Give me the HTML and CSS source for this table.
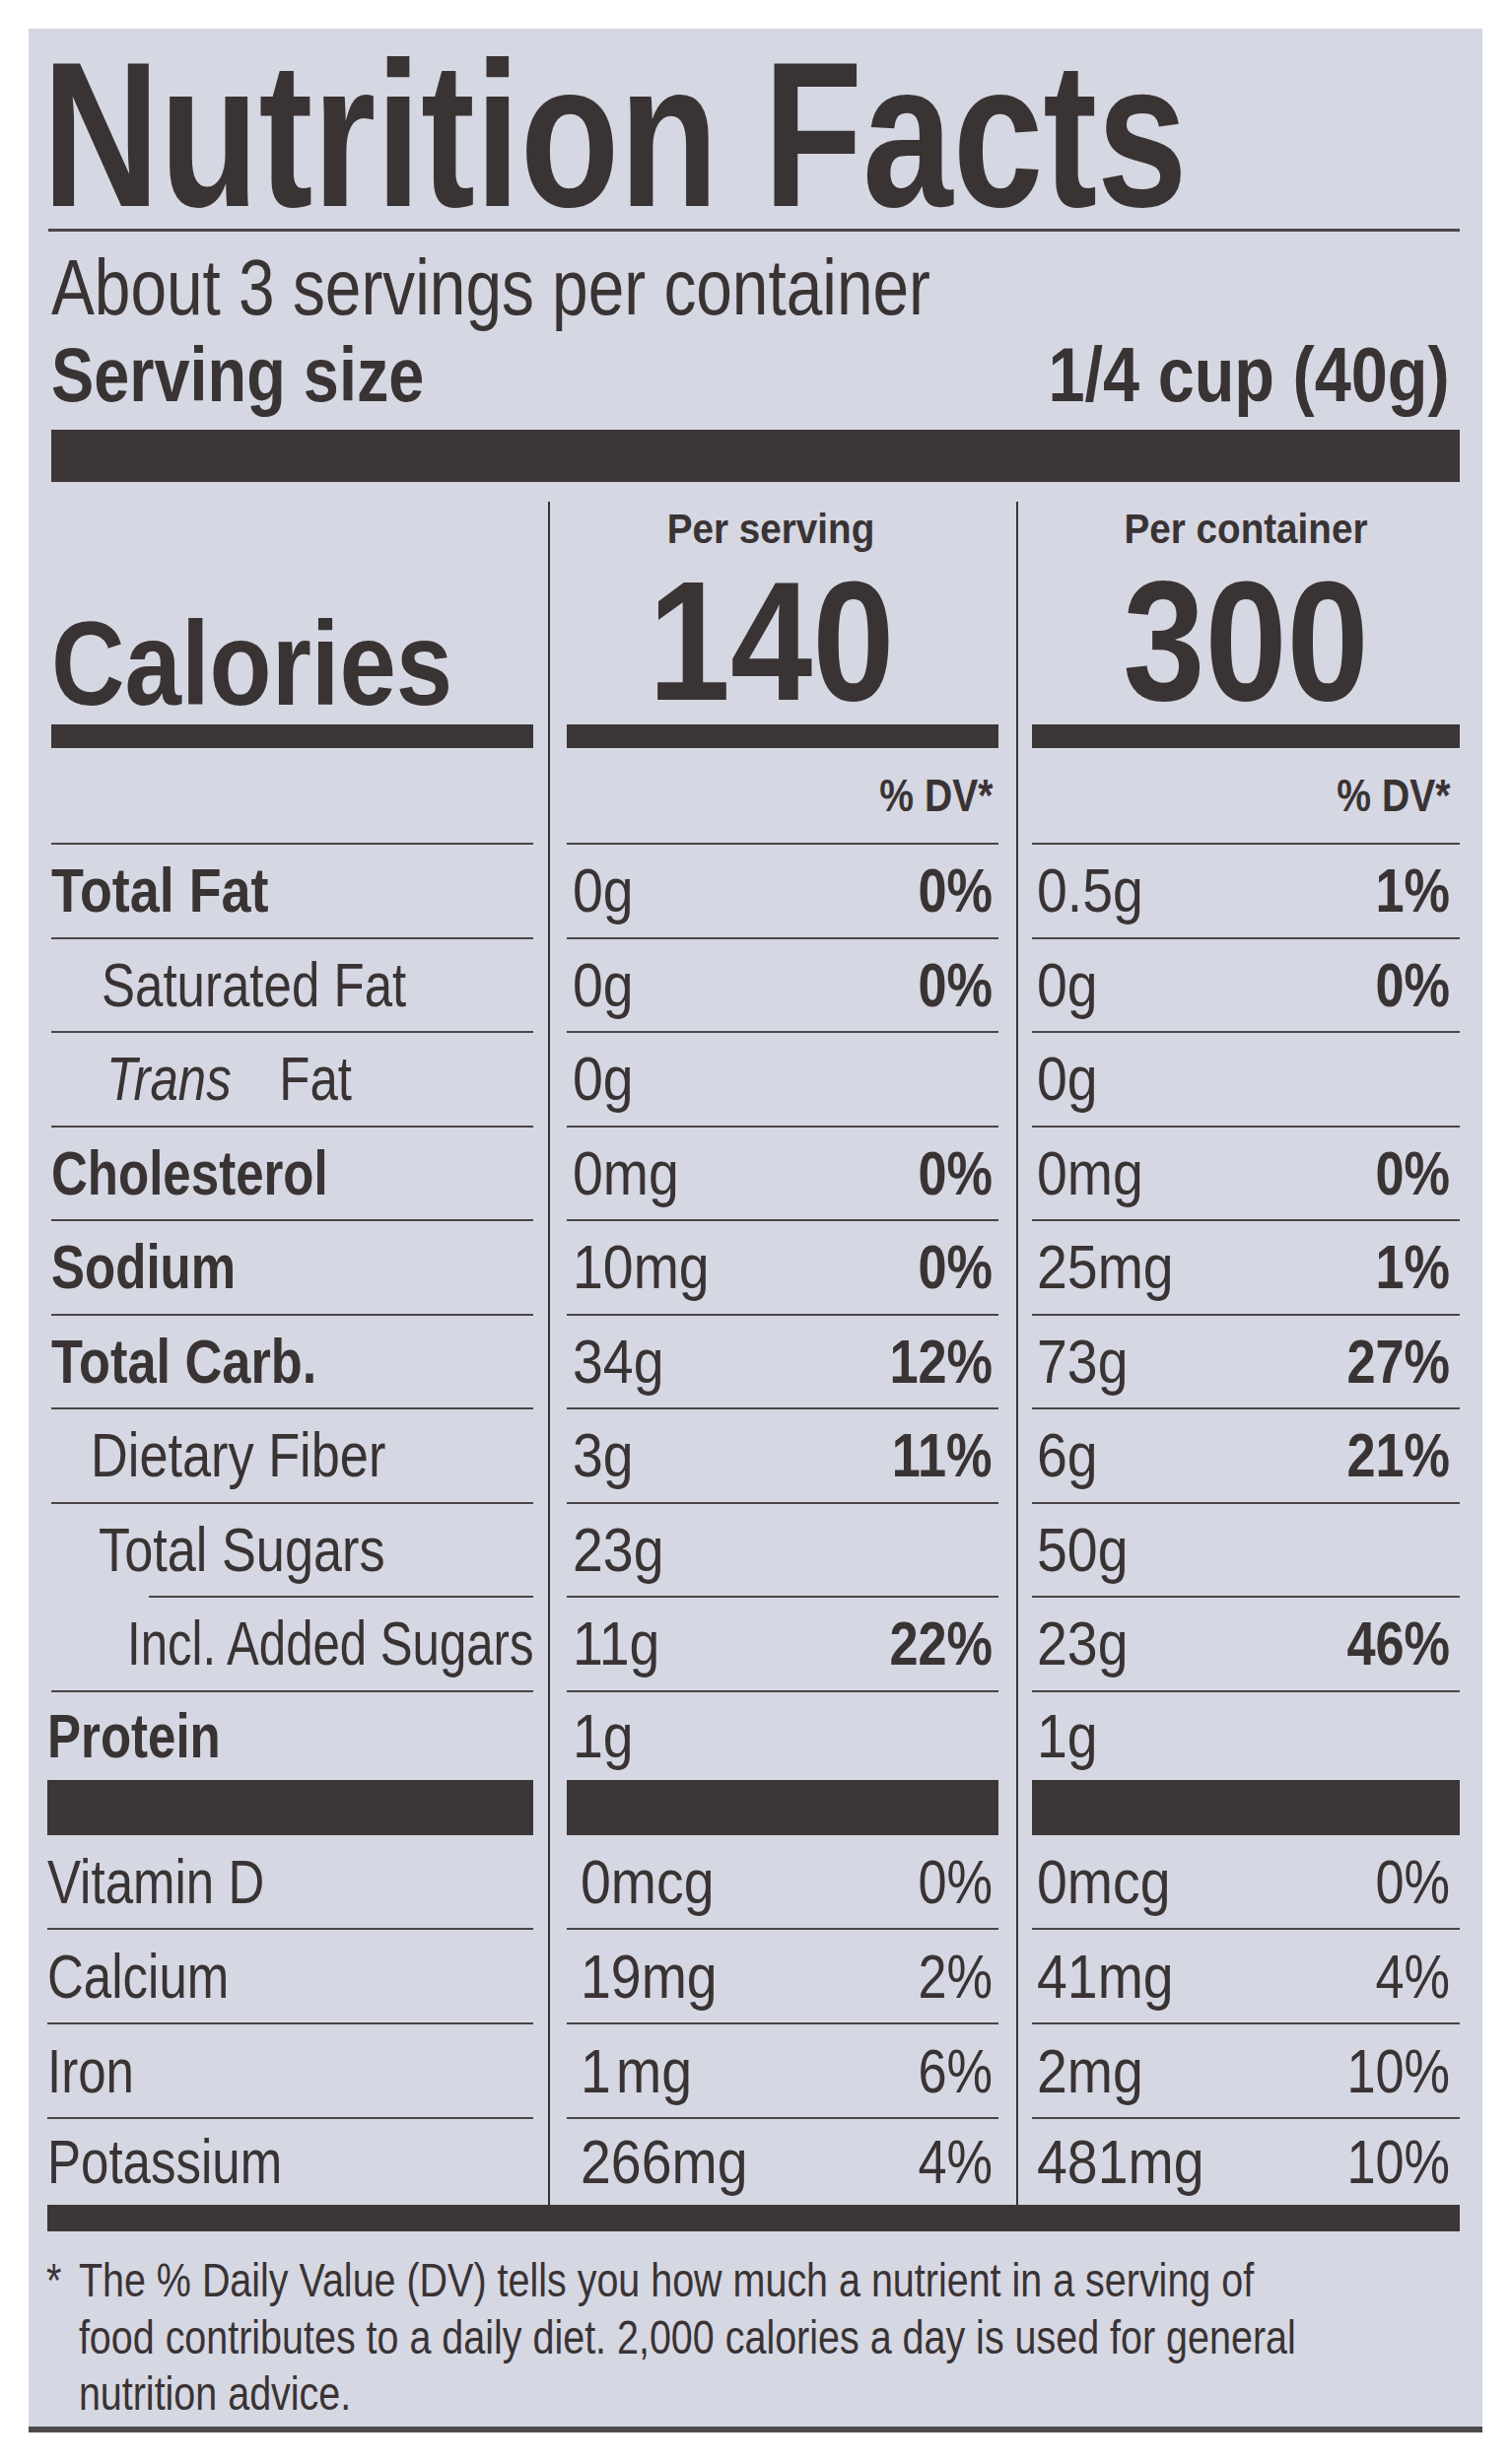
FILE: index.html
```html
<!DOCTYPE html>
<html lang="en">
<head>
<meta charset="utf-8">
<title>Nutrition Facts</title>
<link rel="stylesheet" href="styles.css">
</head>
<body>
<div class="page">
  <section class="label">
    <h1 class="title">Nutrition Facts</h1>
    <div class="hair"></div>
    <p class="servings">About 3 servings per container</p>
    <div class="serving-size"><span class="ss-lab">Serving size</span><span class="ss-val">1/4 cup (40g)</span></div>
    <div class="bar-top"></div>

    <div class="table">
      <div class="row head">
        <div class="c c1"><div class="cal">Calories</div><div class="bar-m"></div></div>
        <div class="c c2"><div class="per">Per serving</div><div class="big">140</div><div class="bar-m"></div></div>
        <div class="c c3"><div class="per">Per container</div><div class="big">300</div><div class="bar-m"></div></div>
      </div>

      <div class="row dvr">
        <div class="c c1"><div class="in"></div></div>
        <div class="c c2"><div class="in"><span>% DV*</span></div></div>
        <div class="c c3"><div class="in"><span>% DV*</span></div></div>
      </div>

      <div class="row n">
        <div class="c c1"><div class="in b"><span class="wide">Total Fat</span></div></div>
        <div class="c c2"><div class="in"><span>0g</span><span class="b">0%</span></div></div>
        <div class="c c3"><div class="in"><span>0.5g</span><span class="b">1%</span></div></div>
      </div>
      <div class="row n">
        <div class="c c1"><div class="in ind-sat"><span>Saturated Fat</span></div></div>
        <div class="c c2"><div class="in"><span>0g</span><span class="b">0%</span></div></div>
        <div class="c c3"><div class="in"><span>0g</span><span class="b">0%</span></div></div>
      </div>
      <div class="row n">
        <div class="c c1"><div class="in ind-trans"><span><i class="it">Trans</i>Fat</span></div></div>
        <div class="c c2"><div class="in"><span>0g</span></div></div>
        <div class="c c3"><div class="in"><span>0g</span></div></div>
      </div>
      <div class="row n">
        <div class="c c1"><div class="in b"><span>Cholesterol</span></div></div>
        <div class="c c2"><div class="in"><span>0mg</span><span class="b">0%</span></div></div>
        <div class="c c3"><div class="in"><span>0mg</span><span class="b">0%</span></div></div>
      </div>
      <div class="row n">
        <div class="c c1"><div class="in b"><span>Sodium</span></div></div>
        <div class="c c2"><div class="in"><span>10mg</span><span class="b">0%</span></div></div>
        <div class="c c3"><div class="in"><span>25mg</span><span class="b">1%</span></div></div>
      </div>
      <div class="row n">
        <div class="c c1"><div class="in b"><span class="wide2">Total Carb.</span></div></div>
        <div class="c c2"><div class="in"><span>34g</span><span class="b">12%</span></div></div>
        <div class="c c3"><div class="in"><span>73g</span><span class="b">27%</span></div></div>
      </div>
      <div class="row n">
        <div class="c c1"><div class="in ind-fib"><span class="wide2">Dietary Fiber</span></div></div>
        <div class="c c2"><div class="in"><span>3g</span><span class="b">11%</span></div></div>
        <div class="c c3"><div class="in"><span>6g</span><span class="b">21%</span></div></div>
      </div>
      <div class="row n">
        <div class="c c1"><div class="in short ind-sug"><span class="wide2">Total Sugars</span></div></div>
        <div class="c c2"><div class="in"><span>23g</span></div></div>
        <div class="c c3"><div class="in"><span>50g</span></div></div>
      </div>
      <div class="row n">
        <div class="c c1"><div class="in ind-add"><span class="add">Incl. Added Sugars</span></div></div>
        <div class="c c2"><div class="in"><span>11g</span><span class="b">22%</span></div></div>
        <div class="c c3"><div class="in"><span>23g</span><span class="b">46%</span></div></div>
      </div>
      <div class="row n last">
        <div class="c c1"><div class="in b shift"><span>Protein</span></div></div>
        <div class="c c2"><div class="in"><span>1g</span></div></div>
        <div class="c c3"><div class="in"><span>1g</span></div></div>
      </div>

      <div class="row bars">
        <div class="c c1"><div class="bar-l shift"></div></div>
        <div class="c c2"><div class="bar-l"></div></div>
        <div class="c c3"><div class="bar-l"></div></div>
      </div>

      <div class="row v">
        <div class="c c1"><div class="in shift"><span>Vitamin D</span></div></div>
        <div class="c c2"><div class="in"><span>0mcg</span><span>0%</span></div></div>
        <div class="c c3"><div class="in"><span>0mcg</span><span>0%</span></div></div>
      </div>
      <div class="row v">
        <div class="c c1"><div class="in shift"><span>Calcium</span></div></div>
        <div class="c c2"><div class="in"><span>19mg</span><span>2%</span></div></div>
        <div class="c c3"><div class="in"><span>41mg</span><span>4%</span></div></div>
      </div>
      <div class="row v">
        <div class="c c1"><div class="in shift"><span>Iron</span></div></div>
        <div class="c c2"><div class="in"><span><span class="one">1</span>mg</span><span>6%</span></div></div>
        <div class="c c3"><div class="in"><span>2mg</span><span>10%</span></div></div>
      </div>
      <div class="row v last">
        <div class="c c1"><div class="in shift"><span>Potassium</span></div></div>
        <div class="c c2"><div class="in"><span>266mg</span><span>4%</span></div></div>
        <div class="c c3"><div class="in"><span>481mg</span><span>10%</span></div></div>
      </div>
    </div>

    <div class="bar-bot"></div>

    <p class="foot"><span class="star">*</span>The % Daily Value (DV) tells you how much a nutrient in a serving of<br>food contributes to a daily diet. 2,000 calories a day is used for general<br>nutrition advice.</p>
  </section>
</div>
</body>
</html>
```

FILE: styles.css
```css
html, body {
  margin: 0;
  padding: 0;
  background: #ffffff;
}

body {
  font-family: "Liberation Sans", Arial, sans-serif;
  color: #3a3333;
}

.page {
  padding: 29px 0 0 29px;
  overflow: hidden;
}

.label {
  width: 1475px;
  box-sizing: border-box;
  background: #d5d7e3;
  padding: 18px 23px 4px 23px;
  border-bottom: 6px solid #4e494b;
}

.title {
  margin: 0 0 0 -9px;
  font-size: 210px;
  line-height: 180px;
  font-weight: 700;
  white-space: nowrap;
  transform: scaleX(0.784);
  transform-origin: left center;
}

.hair {
  margin: 5px 0 0 -3px;
  height: 3px;
  background: #4b4647;
}

.servings {
  margin: 13.3px 0 0;
  font-size: 80px;
  line-height: 88px;
  white-space: nowrap;
  transform: scaleX(0.822);
  transform-origin: left center;
}

.serving-size {
  display: flex;
  justify-content: space-between;
  font-size: 77px;
  line-height: 88px;
  font-weight: 700;
  padding-right: 10px;
  white-space: nowrap;
}

.ss-lab {
  transform: scaleX(0.842);
  transform-origin: left center;
}

.ss-val {
  transform: scaleX(0.865);
  transform-origin: right center;
}

.bar-top {
  margin-top: 12px;
  height: 53px;
  background: #3d3637;
}

.table {
  margin-top: 20px;
}

.row {
  display: grid;
  grid-template-columns: 504px 475px 450px;
}

.c {
  box-sizing: border-box;
  min-width: 0;
}

.c1 {
  padding-right: 15px;
}

.c2 {
  border-left: 2px solid #3a3333;
  padding: 0 18px 0 17px;
}

.c3 {
  border-left: 2px solid #3a3333;
  padding-left: 14px;
}

/* header row */
.head .c {
  height: 250px;
  display: flex;
  flex-direction: column;
  justify-content: flex-end;
}

.bar-m {
  height: 24px;
  background: #3d3637;
}

.cal {
  font-size: 120px;
  line-height: 120px;
  font-weight: 700;
  margin-bottom: 2px;
  white-space: nowrap;
  transform: scaleX(0.86);
  transform-origin: left center;
}

.per {
  font-size: 42px;
  line-height: 50px;
  font-weight: 700;
  text-align: center;
  margin-bottom: 13px;
  white-space: nowrap;
  transform: scaleX(0.92);
}

.big {
  font-size: 172px;
  line-height: 150px;
  font-weight: 700;
  text-align: center;
  margin-bottom: 10px;
  transform: scaleX(0.87);
}

.c2 .per,
.c2 .big {
  padding-right: 26px;
}

/* generic cell content */
.in {
  display: flex;
  justify-content: space-between;
  box-sizing: content-box;
  border-bottom: 2px solid #4a4546;
  white-space: nowrap;
}

.in > span {
  transform: scaleX(0.81);
  transform-origin: left center;
}

.c2 .in > span:first-child,
.c3 .in > span:first-child {
  transform: scaleX(0.88);
}

.in > span:last-child:not(:first-child) {
  transform: scaleX(0.83);
  transform-origin: right center;
}

.c2 .in > span:last-child:not(:first-child) {
  margin-right: 6px;
}

.c3 .in > span:last-child:not(:first-child) {
  margin-right: 10px;
}

.n .c2 .in {
  padding-left: 6px;
}

.c3 .in {
  padding-left: 5px;
}

.b {
  font-weight: 700;
}

.dvr .in {
  height: 96px;
  line-height: 96px;
  font-size: 46px;
  font-weight: 700;
  justify-content: flex-end;
}

.dvr .in > span:first-child {
  transform: scaleX(0.85);
  transform-origin: right center;
}

.dvr .c2 .in > span {
  margin-right: 6px;
}

.dvr .c3 .in > span {
  margin-right: 10px;
}

.n .in {
  height: 93.5px;
  line-height: 93.5px;
  font-size: 63px;
}

.n.last .in {
  height: 89.5px;
  line-height: 89.5px;
  border-bottom: 0;
}

.in.short {
  border-bottom-color: transparent;
  background: linear-gradient(#4a4546, #4a4546) no-repeat;
  background-origin: border-box;
  background-position: 99px 100%;
  background-size: calc(100% - 99px) 2px;
}

.ind-sat { padding-left: 51px; }
.ind-trans { padding-left: 56px; }
.ind-fib { padding-left: 40px; }
.ind-sug { padding-left: 48px; }
.ind-add { padding-left: 77px; }

.in > span.wide {
  transform: scaleX(0.855);
}

.in > span.wide2 {
  transform: scaleX(0.83);
}

.in > span.add {
  transform: scaleX(0.78);
}

.it {
  font-style: italic;
  margin-right: 60px;
}

.shift {
  margin-left: -4px;
}

.bars .c {
  height: 56px;
}

.bar-l {
  height: 56px;
  background: #3d3637;
}

.v .in {
  height: 94px;
  line-height: 94px;
  font-size: 63px;
}

.v .c2 .in {
  padding-left: 14px;
}

.v.last .in {
  height: 87px;
  line-height: 87px;
  border-bottom: 0;
}

.one {
  margin-right: 6px;
}

.bar-bot {
  margin-left: -4px;
  height: 27px;
  background: #3d3637;
}

.foot {
  margin: 21px 0 0 -5px;
  padding-left: 40px;
  font-size: 48px;
  line-height: 57.5px;
  white-space: nowrap;
  transform: scaleX(0.822);
  transform-origin: left center;
}

.star {
  display: inline-block;
  width: 40px;
  margin-left: -40px;
}
```
